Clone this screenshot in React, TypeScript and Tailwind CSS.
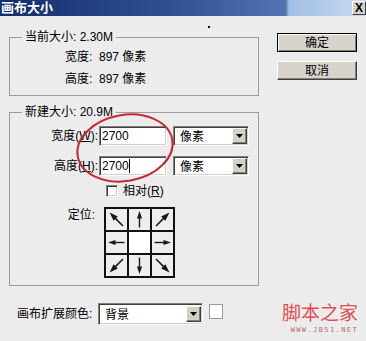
import React from 'react';

const font = "font-['Liberation_Sans','Noto_Sans_CJK_SC',sans-serif]";

const sunken =
  'border border-t-[#808080] border-l-[#808080] border-b-white border-r-white shadow-[inset_1px_1px_0_#404040,inset_-1px_-1px_0_#d4d0c8] bg-white';

const DropButton = () => (
  <div className="w-[15px] h-[16px] bg-[#d4d0c8] border border-t-white border-l-white border-b-[#404040] border-r-[#404040] shadow-[inset_-1px_-1px_0_#808080] flex items-center justify-center">
    <svg width="7" height="4" viewBox="0 0 7 4">
      <polygon points="0,0 7,0 3.5,4" fill="#000" />
    </svg>
  </div>
);

const Select = ({ label, className }: { label: string; className: string }) => (
  <div className={`${sunken} ${className} flex items-center justify-between pl-[6px] pr-[1px]`}>
    <span className="text-[12px] leading-[14px] pt-[2px]">{label}</span>
    <DropButton />
  </div>
);

const Arrow = ({ angle }: { angle: number }) => {
  const diag = angle % 90 !== 0;
  return (
    <svg width="21" height="21" viewBox="0 0 21 21">
      <g transform={`translate(10.5 10.5) rotate(${angle}) scale(${diag ? 1.15 : 1})`}>
        <line x1="0" y1="-2" x2="0" y2="8" stroke="#1a1a1a" strokeWidth="1.4" />
        <polygon points="0,-8.5 -2.6,-1 2.6,-1" fill="#1a1a1a" />
      </g>
    </svg>
  );
};

const anchorCells: (number | null)[] = [-45, 0, 45, -90, null, 90, -135, 180, 135];

const Group = ({ title, className, children }: { title: string; className: string; children: React.ReactNode }) => (
  <div className={`relative border border-[#9c9c9c] ${className}`}>
    <span className="absolute left-[12px] -top-[8px] px-[3px] bg-[#ececec] text-[12px] leading-[14px]">{title}</span>
    {children}
  </div>
);

export default function App() {
  return (
    <div className={`relative w-[366px] h-[341px] overflow-hidden bg-[#ececec] text-black ${font}`}>
      {/* title bar */}
      <div className="h-[16px] flex items-center justify-between bg-[linear-gradient(90deg,#142e6c_0%,#2d4f92_45%,#5274b2_78%,#a2bfe4_79%,#c8daf0_100%)]">
        <span className="pl-[1px] text-white font-bold text-[13px] leading-[16px]">画布大小</span>
        <div className="w-[14px] h-[14px] mr-[0px] bg-[#d4d0c8] border border-t-white border-l-white border-b-[#404040] border-r-[#404040] flex items-center justify-center">
          <span className="text-[12px] leading-[12px] font-bold">X</span>
        </div>
      </div>

      <div className="flex pl-[9px]">
        <div className="w-[250px]">
          <Group title="当前大小: 2.30M" className="mt-[21px] h-[59px] pt-[12px]">
            <div className="pl-[55px] text-[12px] leading-[14px] flex flex-col gap-[8px]">
              <span>宽度:&nbsp; 897 像素</span>
              <span>高度:&nbsp; 897 像素</span>
            </div>
          </Group>

          <Group title="新建大小: 20.9M" className="mt-[16px] h-[174px] pt-[13px]">
            <div className="flex items-center">
              <span className="w-[89px] pr-[1px] text-right text-[12px] leading-[14px]">
                宽度(<span className="underline">W</span>):
              </span>
              <div className={`${sunken} w-[68px] h-[20px] flex items-center pl-[2px] text-[12px]`}>2700</div>
              <Select label="像素" className="ml-[6px] w-[76px] h-[20px]" />
            </div>
            <div className="flex items-center mt-[10px]">
              <span className="w-[89px] pr-[1px] text-right text-[12px] leading-[14px]">
                高度(<span className="underline">H</span>):
              </span>
              <div className={`${sunken} w-[68px] h-[20px] flex items-center pl-[2px] text-[12px]`}>
                2700<span className="w-px h-[14px] bg-black" />
              </div>
              <Select label="像素" className="ml-[6px] w-[76px] h-[20px]" />
            </div>
            <div className="flex items-center mt-[8px] pl-[96px] h-[14px]">
              <div className={`${sunken} w-[12px] h-[12px]`} />
              <span className="ml-[5px] text-[12px] leading-[14px]">
                相对(<span className="underline">R</span>)
              </span>
            </div>
            <div className="flex items-start mt-[9px]">
              <span className="w-[85px] text-right text-[12px] leading-[14px] mt-[1px]">定位:</span>
              <div className="ml-[9px] grid grid-cols-3 gap-[2px] bg-[#111] p-[2px] w-[71px]">
                {anchorCells.map((a, i) => (
                  <div
                    key={i}
                    className={`w-[21px] h-[21px] flex items-center justify-center ${a === null ? 'bg-white' : 'bg-[#eeeeee]'}`}
                  >
                    {a !== null && <Arrow angle={a} />}
                  </div>
                ))}
              </div>
            </div>
          </Group>
        </div>

        <div className="ml-[18px] pt-[17px] flex flex-col gap-[9px]">
          <button className="w-[80px] h-[19px] bg-[#d8d4cc] border border-black shadow-[inset_1px_1px_0_#fff,inset_-1px_-1px_0_#808080] text-[12px] leading-[14px]">
            确定
          </button>
          <button className="w-[80px] h-[19px] bg-[#d8d4cc] border border-t-white border-l-white border-b-[#404040] border-r-[#404040] shadow-[inset_-1px_-1px_0_#808080] text-[12px] leading-[14px]">
            取消
          </button>
        </div>
      </div>

      {/* bottom row */}
      <div className="flex items-start mt-[17px] pl-[17px] pr-[8px]">
        <span className="w-[81px] text-[12px] leading-[14px] mt-[4px]">画布扩展颜色:</span>
        <Select label="背景" className="w-[105px] h-[22px]" />
        <div className="ml-[6px] mt-[1px] w-[14px] h-[15px] bg-white border border-[#9a9a9a]" />
        <div className="ml-auto flex flex-col items-end">
          <span className="text-[19px] leading-[21px] text-[#e34c55] tracking-[0px]">脚本之家</span>
          <span className="mt-[3px] text-[7px] leading-[7px] tracking-[1.4px] text-[#b86a6a] font-['DejaVu_Sans_Mono',monospace]">
            WWW.JB51.NET
          </span>
        </div>
      </div>

      {/* stray dot on the capture */}
      <div className="absolute left-[208px] top-[26px] w-[2px] h-[2px] bg-black" />

      {/* red hand drawn ellipse */}
      <svg className="absolute left-0 top-0 pointer-events-none" width="366" height="341" viewBox="0 0 366 341">
        <ellipse
          cx="125"
          cy="148"
          rx="48"
          ry="33"
          transform="rotate(-10 125 148)"
          fill="none"
          stroke="#c42a32"
          strokeWidth="2"
        />
      </svg>
    </div>
  );
}
